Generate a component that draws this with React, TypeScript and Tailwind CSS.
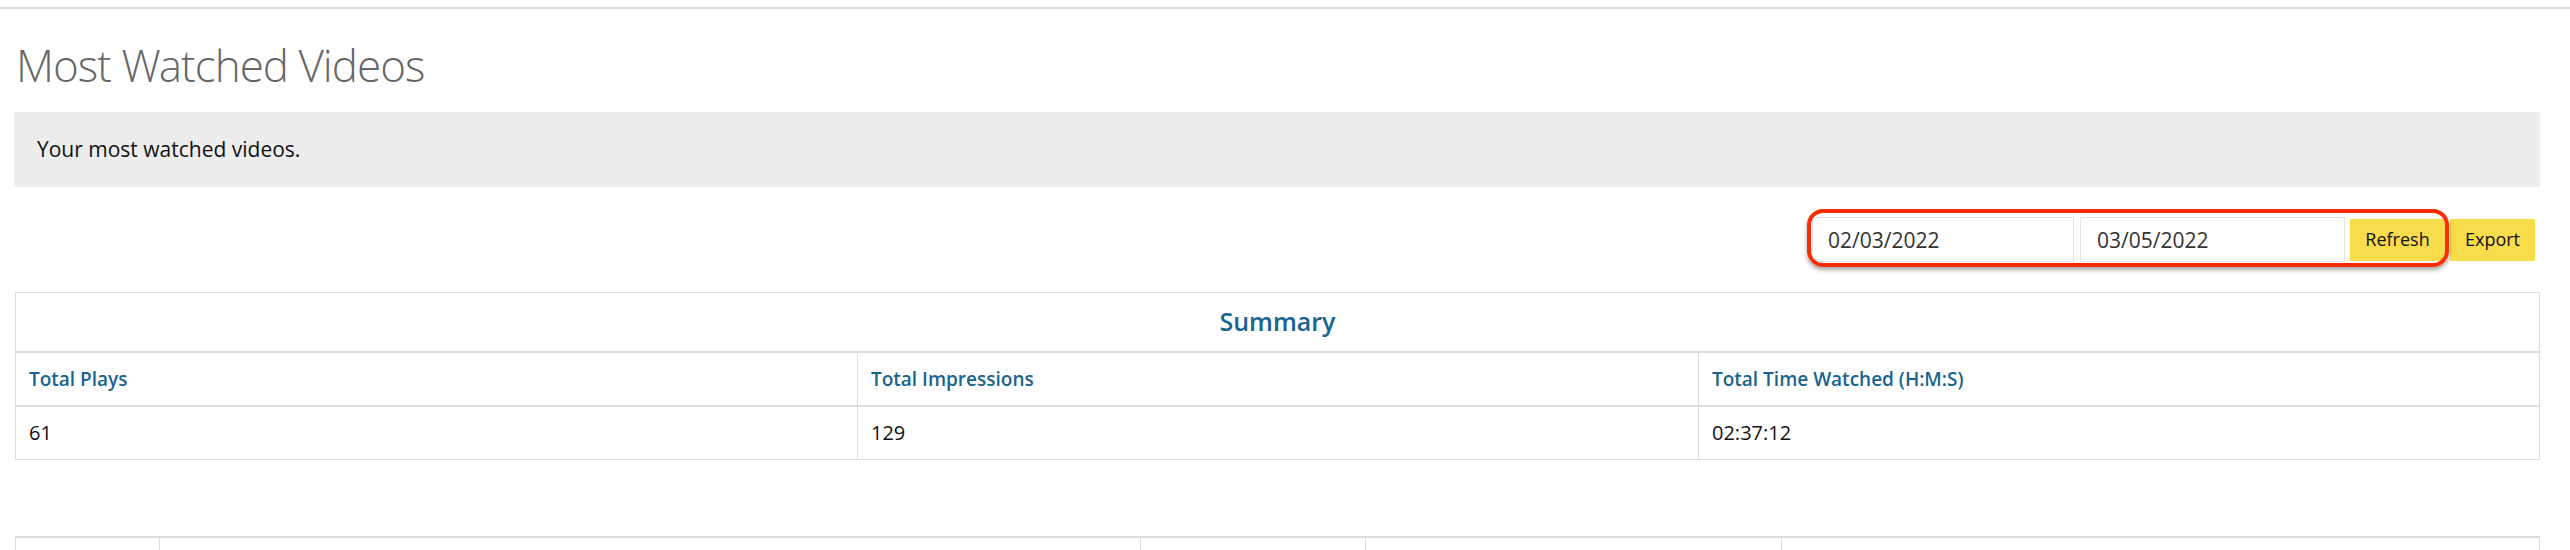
import React from 'react';

const summary = [
  { label: 'Total Plays', value: '61' },
  { label: 'Total Impressions', value: '129' },
  { label: 'Total Time Watched (H:M:S)', value: '02:37:12' },
];

// widths of the video list columns (the rest of the table is below the fold)
const videoColumns = ['col-rank', 'col-video', 'col-plays', 'col-impressions', 'col-time'];

const App: React.FC = () => {
  return (
    <div className="h-[550px] overflow-hidden bg-white font-['Open_Sans',sans-serif]">
      {/* top rule */}
      <div className="pt-[7px]">
        <div className="h-[2px] bg-[#dcdcdc]" />
      </div>

      <div className="pl-[14px] pr-[30px]">
        <h1 className="mt-[34px] pl-[2px] font-['Open_Sans_Light','Open_Sans',sans-serif] text-[44px] font-light leading-none tracking-[-1px] text-[#666]">
          Most Watched Videos
        </h1>

        <div className="mt-[25px] flex h-[75px] items-center bg-[#ededed] px-[23px] text-[21px] text-[#111]">
          Your most watched videos.
        </div>

        {/* date range + actions */}
        <div className="mt-[30px] flex items-center justify-end pr-[5px]">
          <div className="relative flex h-[45px] items-center">
            <input
              readOnly
              value="02/03/2022"
              className="h-[45px] w-[262px] border border-[#e3e3e3] bg-white px-[15px] text-[21px] text-[#333] outline-none"
            />
            <input
              readOnly
              value="03/05/2022"
              className="ml-[6px] h-[45px] w-[265px] border border-[#e3e3e3] bg-white px-[16px] text-[21px] text-[#333] outline-none"
            />
            <button className="ml-[5px] h-[42px] w-[95px] bg-[#f7dc4b] text-[18px] text-[#111]">
              Refresh
            </button>
            {/* annotation ring */}
            <div className="pointer-events-none absolute -top-[8px] -bottom-[5px] -left-[5px] -right-[4px] rounded-[16px] border-4 border-[#ff2a00] shadow-[0_3px_4px_rgba(0,0,0,0.35)]" />
          </div>
          <button className="ml-[5px] h-[42px] w-[85px] bg-[#f7dc4b] text-[18px] text-[#111]">
            Export
          </button>
        </div>

        {/* summary table */}
        <div className="ml-[1px] mt-[30px] border border-[#dddddd]">
          <div className="flex h-[60px] items-center justify-center border-b-2 border-[#dddddd] text-[25px] font-semibold text-[#17648f]">
            Summary
          </div>
          <div className="grid grid-cols-3 border-b-2 border-[#dddddd]">
            {summary.map((s, i) => (
              <div
                key={s.label}
                className={`flex h-[52px] items-center px-[13px] text-[19px] font-semibold text-[#17648f] ${i > 0 ? 'border-l border-[#dddddd]' : ''}`}
              >
                {s.label}
              </div>
            ))}
          </div>
          <div className="grid grid-cols-3">
            {summary.map((s, i) => (
              <div
                key={s.label}
                className={`flex h-[52px] items-center px-[13px] text-[20px] text-[#111] ${i > 0 ? 'border-l border-[#dddddd]' : ''}`}
              >
                {s.value}
              </div>
            ))}
          </div>
        </div>

        {/* videos table */}
        <div className="ml-[1px] mt-[76px] border-x border-t-2 border-[#dddddd]">
          <div className="grid grid-cols-[143px_981px_225px_416px_1fr]">
            {videoColumns.map((c, i) => (
              <div
                key={c}
                className={`h-[52px] ${i > 0 ? 'border-l border-[#dddddd]' : ''}`}
              />
            ))}
          </div>
        </div>
      </div>
    </div>
  );
};

export default App;
